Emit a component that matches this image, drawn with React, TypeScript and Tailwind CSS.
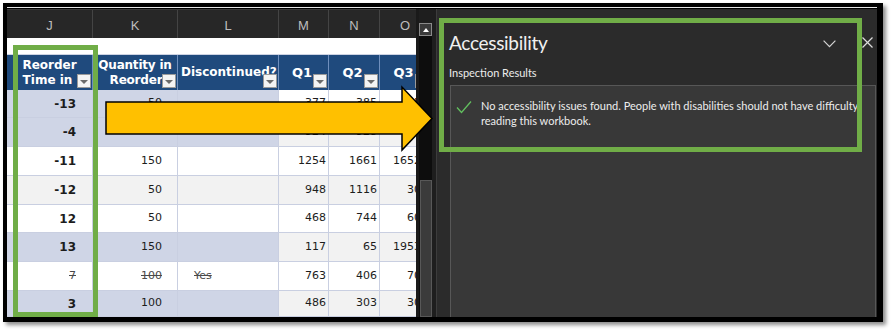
import React from "react";

type Row = {
  h: string;
  band: "w" | "g";
  lav: boolean;
  J: string;
  K: string;
  L: string;
  M: string;
  N: string;
  O: string;
  strike?: boolean;
};

const rows: Row[] = [
  { h: "h-[28px]", band: "w", lav: true, J: "-13", K: "50", L: "", M: "377", N: "385", O: "352" },
  { h: "h-[29px]", band: "g", lav: true, J: "-4", K: "", L: "", M: "924", N: "928", O: "412" },
  { h: "h-[29px]", band: "w", lav: false, J: "-11", K: "150", L: "", M: "1254", N: "1661", O: "16521" },
  { h: "h-[29px]", band: "g", lav: false, J: "-12", K: "50", L: "", M: "948", N: "1116", O: "302" },
  { h: "h-[28px]", band: "w", lav: false, J: "12", K: "50", L: "", M: "468", N: "744", O: "608" },
  { h: "h-[29px]", band: "g", lav: true, J: "13", K: "150", L: "", M: "117", N: "65", O: "19534" },
  { h: "h-[29px]", band: "w", lav: false, J: "7", K: "100", L: "Yes", M: "763", N: "406", O: "702", strike: true },
  { h: "h-[26px]", band: "g", lav: true, J: "3", K: "100", L: "", M: "486", N: "303", O: "305" },
];

const sheetFont = { fontFamily: '"DejaVu Sans", Verdana, sans-serif' };
const uiFont = { fontFamily: 'Lato, "Open Sans", sans-serif' };

function FilterBtn() {
  return (
    <div className="absolute right-[1px] bottom-[2px] w-[14px] h-[14px] bg-[#f4f4f4] border border-[#9a9a9a] flex items-center justify-center">
      <div className="mt-[2px] w-0 h-0 border-l-[4px] border-r-[4px] border-t-[4px] border-l-transparent border-r-transparent border-t-[#6b6b6b]" />
    </div>
  );
}

function bandBg(b: "w" | "g") {
  return b === "w" ? "bg-white" : "bg-[#f2f2f2]";
}

function Sheet() {
  return (
    <div className="w-[409px] flex flex-col overflow-hidden bg-white" style={sheetFont}>
      {/* column letters */}
      <div className="h-[29px] flex bg-[#272727] border-t border-[#3a3a3a] text-[#bdbdbd] text-[13px]" style={{ fontFamily: '"Liberation Sans", Arial, sans-serif' }}>
        <div className="w-[86px] shrink-0 border-r border-[#444] flex items-end justify-center pb-[3px]">J</div>
        <div className="w-[85px] shrink-0 border-r border-[#444] flex items-end justify-center pb-[3px]">K</div>
        <div className="w-[101px] shrink-0 border-r border-[#444] flex items-end justify-center pb-[3px]">L</div>
        <div className="w-[50px] shrink-0 border-r border-[#444] flex items-end justify-center pb-[3px]">M</div>
        <div className="w-[51px] shrink-0 border-r border-[#444] flex items-end justify-center pb-[3px]">N</div>
        <div className="w-[50px] shrink-0 flex items-end justify-center pb-[3px]">O</div>
      </div>
      {/* blank row */}
      <div className="h-[17px] bg-white border-b border-[#cdd3e3]" />
      {/* table header */}
      <div className="h-[35px] flex bg-[#1f4a7d] text-white font-bold text-[12px] leading-[15px]">
        <div className="relative w-[86px] shrink-0 border-r border-[#6f8fbd] flex flex-col items-center justify-center text-center">
          <span>Reorder</span>
          <span className="pr-[4px]">Time in</span>
          <FilterBtn />
        </div>
        <div className="relative w-[85px] shrink-0 border-r border-[#6f8fbd] flex flex-col items-center justify-center text-center tracking-[-0.2px]">
          <span>Quantity in</span>
          <span className="pl-[2px]">Reorder</span>
          <FilterBtn />
        </div>
        <div className="relative w-[101px] shrink-0 border-r border-[#6f8fbd] flex items-center pl-[3px] whitespace-nowrap">
          <span>Discontinued?</span>
          <FilterBtn />
        </div>
        <div className="relative w-[50px] shrink-0 border-r border-[#6f8fbd] flex items-center justify-center pr-[3px] text-[13px]">
          <span>Q1</span>
          <FilterBtn />
        </div>
        <div className="relative w-[51px] shrink-0 border-r border-[#6f8fbd] flex items-center justify-center pr-[3px] text-[13px]">
          <span>Q2</span>
          <FilterBtn />
        </div>
        <div className="relative w-[50px] shrink-0 flex items-center justify-center pr-[3px] text-[13px]">
          <span>Q3</span>
          <FilterBtn />
        </div>
      </div>
      {/* data rows */}
      {rows.map((r, i) => {
        const lead = r.lav ? "bg-[#cfd5e6]" : bandBg(r.band);
        const rest = bandBg(r.band);
        const st = !!r.strike;
        return (
          <div key={i} className={`${r.h} flex shrink-0 text-[11px] text-[#1c1c1c]`}>
            <div className={`${lead} w-[86px] shrink-0 border-r border-b border-[#c9cfe1] flex items-center justify-end pr-[16px] ${st ? "line-through text-[#4a4a4a] font-normal" : "font-bold text-[12px]"}`}>
              {r.J}
            </div>
            <div className={`${lead} w-[85px] shrink-0 border-r border-b border-[#c9cfe1] flex items-center justify-end pr-[15px] ${st ? "line-through text-[#4a4a4a]" : ""}`}>
              {r.K}
            </div>
            <div className={`${lead} w-[101px] shrink-0 border-r border-b border-[#c9cfe1] flex items-center pl-[16px] ${st ? "line-through text-[#4a4a4a]" : ""}`}>
              {r.L}
            </div>
            <div className={`${rest} w-[50px] shrink-0 border-r border-b border-[#c9cfe1] flex items-center justify-end pr-[2px]`}>{r.M}</div>
            <div className={`${rest} w-[51px] shrink-0 border-r border-b border-[#c9cfe1] flex items-center justify-end pr-[2px]`}>{r.N}</div>
            <div className={`${rest} w-[50px] shrink-0 border-b border-[#c9cfe1] flex items-center justify-end pr-[2px] whitespace-nowrap`}>{r.O}</div>
          </div>
        );
      })}
    </div>
  );
}

function Scrollbar() {
  return (
    <div className="w-[13px] flex flex-col bg-[#0d0d0d]">
      <div className="h-[14px] bg-[#1e1e1e]" />
      <div className="h-[13px] bg-[#3a3a3a] border border-[#8a8a8a] flex items-center justify-center">
        <div className="w-0 h-0 border-l-[3px] border-r-[3px] border-b-[4px] border-l-transparent border-r-transparent border-b-white" />
      </div>
      <div className="h-[144px]" />
      <div className="flex-1 ml-[1px] bg-[#3b3b3b] border border-[#585858]" />
    </div>
  );
}

function Pane() {
  return (
    <div className="w-[440px] bg-[#2b2b2b] flex flex-col text-[#ececec]" style={uiFont}>
      <div className="h-[28px] mt-[20px] flex items-center pl-[12px] pr-[4px]">
        <span className="text-[19px] leading-[28px] tracking-[-0.3px] text-[#f0f0f0]">Accessibility</span>
        <div className="flex-1" />
        <svg width="13" height="8" viewBox="0 0 13 8" className="mt-[1px]">
          <polyline points="0.6,0.6 6.5,6.6 12.4,0.6" fill="none" stroke="#d4d4d4" strokeWidth="1.2" />
        </svg>
        <svg width="11" height="11" viewBox="0 0 11 11" className="ml-[26px] -mt-[1px]">
          <line x1="0.5" y1="0.5" x2="10.5" y2="10.5" stroke="#dcdcdc" strokeWidth="1.3" />
          <line x1="10.5" y1="0.5" x2="0.5" y2="10.5" stroke="#dcdcdc" strokeWidth="1.3" />
        </svg>
      </div>
      <div className="mt-[8px] pl-[12px] text-[11px] leading-[16px] h-[16px]">Inspection Results</div>
      <div className="mt-[4px] ml-[13px] mr-[1px] flex-1 bg-[#383838] border-t border-l border-r border-[#575757]">
        <div className="flex pt-[12px]">
          <svg width="16" height="14" viewBox="0 0 16 14" className="ml-[5px] mt-[2px] shrink-0">
            <polyline points="1,7.5 5.5,12.5 15,1.5" fill="none" stroke="#62bf5f" strokeWidth="1.3" />
          </svg>
          <p className="ml-[9px] text-[11px] leading-[15px] text-[#ededed] whitespace-nowrap">
            No accessibility issues found. People with disabilities should not have difficulty
            <br />
            reading this workbook.
          </p>
        </div>
      </div>
    </div>
  );
}

export default function App() {
  return (
    <div className="relative w-[892px] h-[331px] bg-white overflow-hidden">
      <div className="ml-[3px] mt-[3px] w-[880px] h-[319px] bg-black pt-[4px] pl-[4px] pr-[6px] pb-[5px] flex flex-col shadow-[3px_3px_4px_rgba(0,0,0,0.45)]">
        <div className="h-px bg-[#e6e6e6] shrink-0" />
        <div className="h-px bg-black shrink-0" />
        <div className="flex h-[308px]">
          <Sheet />
          <div className="w-[3px] bg-[#1a1a1a]" />
          <Scrollbar />
          <div className="w-[5px] bg-[#1e1e1e] border-r border-[#3c3c3c]" />
          <Pane />
        </div>
      </div>

      {/* green highlight boxes */}
      <div className="absolute left-[13px] top-[45px] w-[85px] h-[272px] border-[5px] border-[#70ad47]" />
      <div className="absolute left-[439px] top-[18px] w-[423px] h-[134px] border-[5px] border-[#70ad47]" />

      {/* yellow arrow */}
      <svg className="absolute left-0 top-0" width="892" height="331" viewBox="0 0 892 331">
        <polygon
          points="106,102 402,102 402,87 432,118.5 402,150 402,134 106,134"
          fill="#ffc000"
          stroke="#000"
          strokeWidth="1.5"
          strokeLinejoin="miter"
        />
      </svg>
    </div>
  );
}
